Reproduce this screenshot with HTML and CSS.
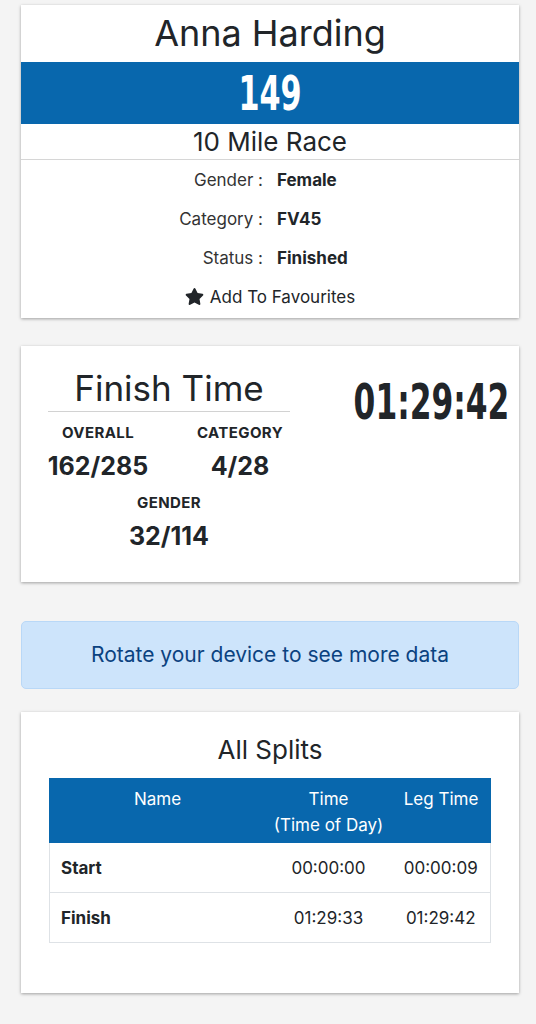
FILE: index.html
```html
<!DOCTYPE html>
<html>
  <head>
    <meta http-equiv="Content-Type" content="text/html; charset=utf-8" />
    <title>Anna Harding - 10 Mile Race</title>
    <link rel="stylesheet" href="styles.css">
  </head>
  <body>
    <main class="page">
      <section class="card runner">
        <h1 class="runner-name">Anna Harding</h1>
        <div class="bib"><span class="narrow">149</span></div>
        <h2 class="race-name">10 Mile Race</h2>
        <dl class="details">
          <dt>Gender :</dt>
          <dd>Female</dd>
          <dt>Category :</dt>
          <dd>FV45</dd>
          <dt>Status :</dt>
          <dd>Finished</dd>
        </dl>
        <a class="favourite" href="#">
          <svg class="star" viewBox="0 0 576 512" width="19" height="17" aria-hidden="true">
            <path d="M259.3 17.8L194 150.2 47.9 171.5c-26.2 3.8-36.7 36.1-17.7 54.6l105.7 103-25 145.5c-4.5 26.3 23.2 46 46.4 33.7L288 439.6l130.7 68.7c23.2 12.2 50.9-7.4 46.4-33.7l-25-145.5 105.7-103c19-18.5 8.5-50.8-17.7-54.6L382 150.2 316.7 17.8c-11.7-23.6-45.6-23.9-57.4 0z" />
          </svg>
          Add To Favourites
        </a>
      </section>

      <section class="card finish">
        <div class="finish-left">
          <h2 class="finish-title">Finish Time</h2>
          <div class="positions">
            <div class="position">
              <div class="position-label">Overall</div>
              <div class="position-value">162/285</div>
            </div>
            <div class="position">
              <div class="position-label">Category</div>
              <div class="position-value">4/28</div>
            </div>
            <div class="position position--wide">
              <div class="position-label">Gender</div>
              <div class="position-value">32/114</div>
            </div>
          </div>
        </div>
        <div class="finish-time"><span class="narrow">01:29:42</span></div>
      </section>

      <div class="alert">Rotate your device to see more data</div>

      <section class="card splits">
        <h2 class="splits-title">All Splits</h2>
        <table class="splits-table">
          <thead>
            <tr>
              <th class="col-name">Name</th>
              <th class="col-time">Time<br />(Time of Day)</th>
              <th class="col-leg">Leg Time</th>
            </tr>
          </thead>
          <tbody>
            <tr>
              <td class="split-name">Start</td>
              <td>00:00:00</td>
              <td>00:00:09</td>
            </tr>
            <tr>
              <td class="split-name">Finish</td>
              <td>01:29:33</td>
              <td>01:29:42</td>
            </tr>
          </tbody>
        </table>
      </section>
    </main>
  </body>
</html>
```

FILE: styles.css
```css
* {
  box-sizing: border-box;
}
html,
body {
  margin: 0;
  padding: 0;
}
body {
  background: #f4f4f4;
  color: #212529;
  font-family: Inter, Roboto, "Noto Sans", sans-serif;
}
.page {
  padding: 5px 17px 30px 21px;
}
.card {
  background: #fff;
  box-shadow: 0 1px 3px rgba(0, 0, 0, 0.35);
}
/* condensed display digits */
.narrow {
  display: inline-block;
  font-family: "DejaVu Sans Condensed", "DejaVu Sans", sans-serif;
  font-weight: 700;
  transform: scaleX(0.7);
}

/* runner card */
.runner {
  padding-bottom: 2px;
}
.runner-name {
  margin: 0;
  height: 57px;
  line-height: 57px;
  text-align: center;
  font-size: 36px;
  font-weight: 400;
}
.bib {
  height: 62px;
  line-height: 62px;
  background: #0867ad;
  color: #fff;
  text-align: center;
  font-size: 48px;
}
.race-name {
  margin: 0;
  height: 36px;
  line-height: 35px;
  text-align: center;
  font-size: 26px;
  font-weight: 400;
  border-bottom: 1px solid #d6d6d6;
}
.details {
  display: grid;
  grid-template-columns: 242px 1fr;
  column-gap: 14px;
  margin: 0;
  font-size: 17px;
}
.details dt,
.details dd {
  margin: 0;
  height: 39px;
  line-height: 40px;
}
.details dt {
  text-align: right;
  color: #333;
}
.details dd {
  font-weight: 700;
}
.favourite {
  display: flex;
  align-items: center;
  justify-content: center;
  gap: 6px;
  height: 39px;
  color: #212529;
  text-decoration: none;
  font-size: 17px;
}
.star {
  fill: #212529;
}

/* finish time card */
.finish {
  display: grid;
  grid-template-columns: 242px 1fr;
  margin-top: 28px;
  padding: 21px 12px 23px 27px;
}
.finish-title {
  margin: 0;
  padding-bottom: 1px;
  text-align: center;
  font-size: 35px;
  font-weight: 400;
  line-height: 43px;
  border-bottom: 1px solid #d2d2d2;
}
.positions {
  display: grid;
  grid-template-columns: 1fr 1fr;
  margin: 0 -21px;
  padding-top: 7px;
}
.position {
  text-align: center;
}
.position--wide {
  grid-column: 1 / 3;
}
.position-label {
  margin-top: 4px;
  font-size: 15px;
  font-weight: 700;
  text-transform: uppercase;
  letter-spacing: 0.4px;
  line-height: 20px;
}
.position-value {
  font-size: 25px;
  font-weight: 700;
  line-height: 46px;
}
.finish-time {
  text-align: right;
  font-size: 49px;
  line-height: 60px;
  padding-top: 5px;
}
.finish-time .narrow {
  transform-origin: right center;
  transform: scaleX(0.71);
}

/* rotate hint */
.alert {
  margin-top: 39px;
  height: 68px;
  line-height: 66px;
  text-align: center;
  background: #cde4fb;
  border: 1px solid #b9d8f7;
  border-radius: 5px;
  color: #0b4280;
  font-size: 21px;
}

/* splits card */
.splits {
  margin-top: 23px;
  padding: 22px 28px 50px 28px;
}
.splits-title {
  margin: 0 0 12px;
  text-align: center;
  font-size: 26px;
  font-weight: 400;
  line-height: 32px;
}
.splits-table {
  width: 100%;
  border-collapse: collapse;
  font-size: 17px;
}
.splits-table th {
  background: #0867ad;
  color: #fff;
  font-weight: 400;
  vertical-align: top;
  text-align: center;
  line-height: 26px;
  padding: 7px 4px 4px;
  border: 1px solid #0867ad;
}
.col-name {
  width: 216px;
}
.col-time {
  width: 126px;
}
.splits-table td {
  height: 50px;
  text-align: center;
  border: 1px solid #dee2e6;
  border-left: 0;
  border-right: 0;
  padding: 0 4px;
}
.splits-table td:first-child {
  border-left: 1px solid #dee2e6;
}
.splits-table td:last-child {
  border-right: 1px solid #dee2e6;
}
.splits-table .split-name {
  text-align: left;
  padding-left: 11px;
  font-weight: 700;
}
```
